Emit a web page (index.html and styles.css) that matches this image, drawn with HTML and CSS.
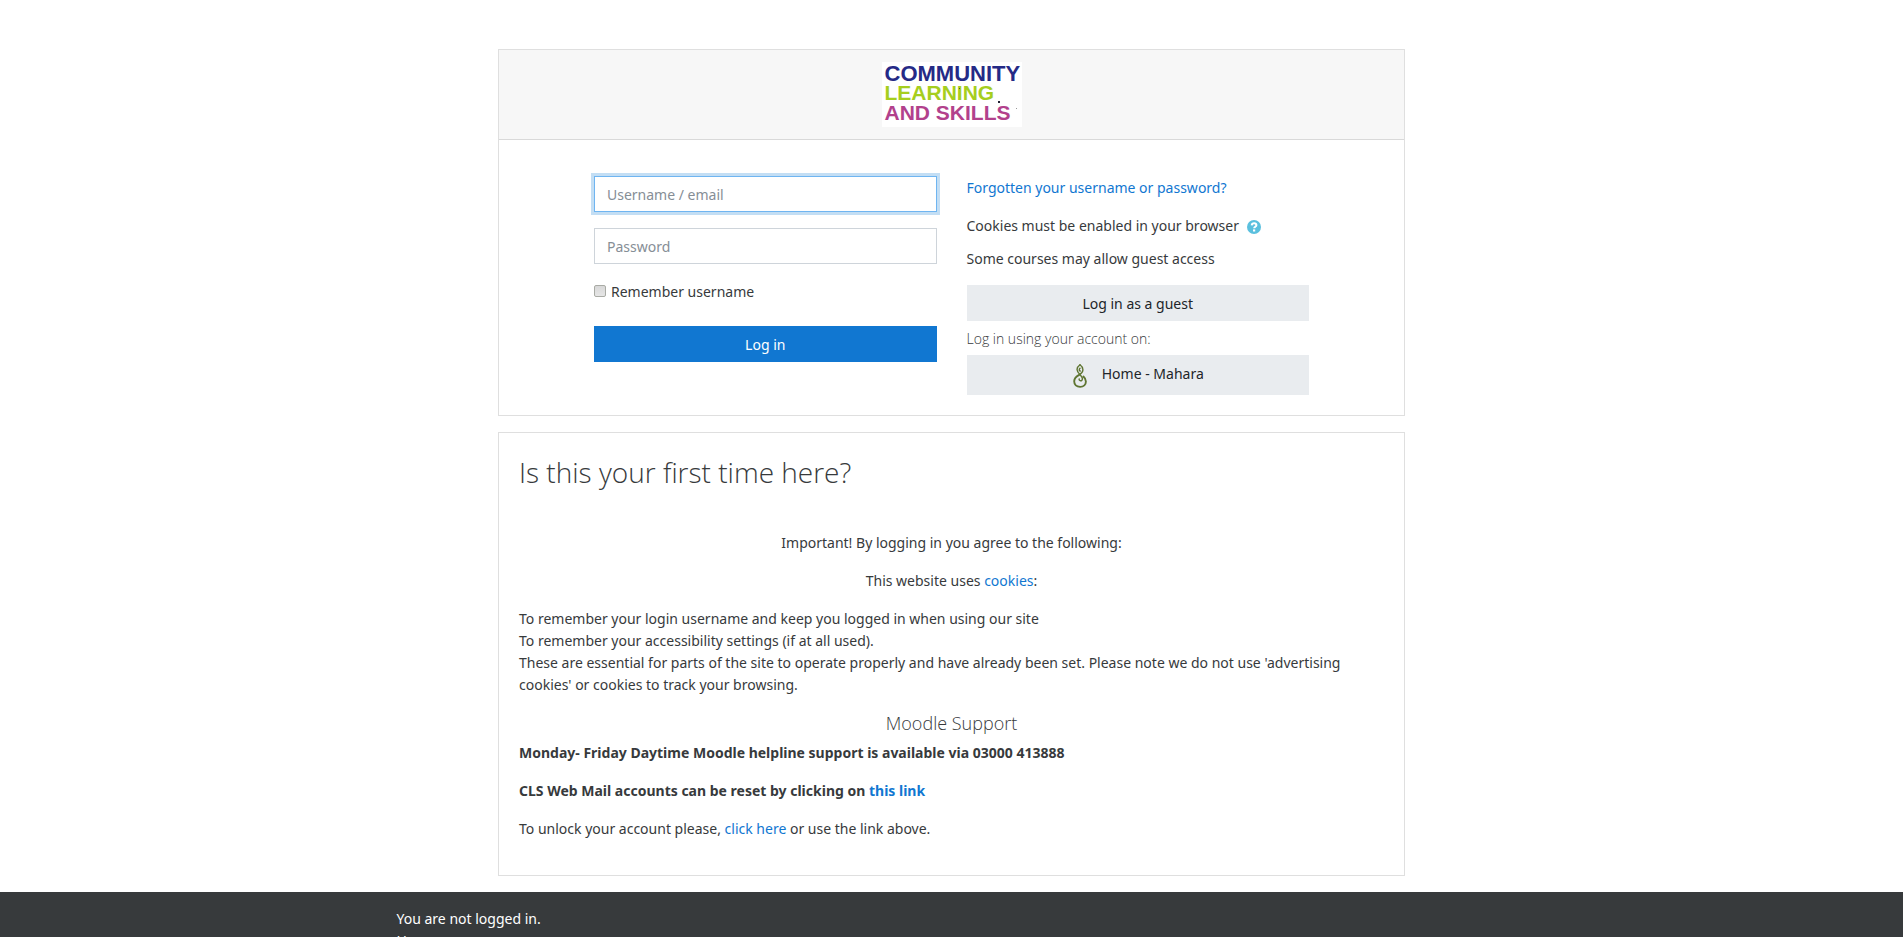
FILE: index.html
```html
<!DOCTYPE html>
<html lang="en">
<head>
<meta charset="utf-8">
<meta name="viewport" content="width=device-width, initial-scale=1">
<title>Community Learning and Skills: Log in</title>
<link rel="stylesheet" href="styles.css">
</head>
<body>
<main class="page">
  <section class="card">
    <header class="card-header">
      <div class="logo">
        <span class="logo-community">COMMUNITY</span>
        <span class="logo-learning">LEARNING</span>
        <span class="logo-skills">AND SKILLS</span>
        <svg class="logo-specks" viewBox="0 0 140 65" aria-hidden="true"><rect x="116" y="39" width="2" height="2" fill="#223"/><rect x="134" y="46" width="1" height="1" fill="#999"/><rect x="77" y="26" width="1" height="1" fill="#453"/></svg>
      </div>
    </header>
    <div class="login">
      <form class="login-form">
        <input class="field field-active" type="text" placeholder="Username / email" aria-label="Username / email">
        <input class="field" type="password" placeholder="Password" aria-label="Password">
        <div class="remember">
          <input class="check" type="checkbox" id="remember">
          <label for="remember">Remember username</label>
        </div>
        <button class="btn btn-primary" type="submit">Log in</button>
      </form>
      <div class="login-options">
        <p class="forgot"><a href="#">Forgotten your username or password?</a></p>
        <div class="cookies">Cookies must be enabled in your browser
          <a class="help" href="#" aria-label="Help with cookies"><svg viewBox="0 0 14 14" width="14" height="14"><circle cx="7" cy="7" r="7" fill="#5bc0de"/><path d="M4.700 5.300C4.900 3.900 5.800 3.300 7.100 3.300c1.400 0 2.300.8 2.300 1.900 0 1.600-2.200 1.500-2.200 3.100" fill="none" stroke="#fff" stroke-width="2"/><rect x="6" y="9.400" width="2.200" height="2.100" fill="#fff"/></svg></a>
        </div>
        <p class="guest">Some courses may allow guest access</p>
        <button class="btn btn-secondary" type="button">Log in as a guest</button>
        <h6 class="providers-title">Log in using your account on:</h6>
        <a class="btn btn-secondary provider" href="#">
          <svg viewBox="0 0 24 24" width="24" height="24" aria-hidden="true"><g fill="none" stroke="#5f7532" stroke-linecap="round"><path stroke-width="1.400" d="M12 .8C10 2.200 9 3.700 9.100 5.600c.1 2.200 1.500 3.600 3 5.200 1.400 1.400 2.400 2.700 2.300 4.200-.1 1.200-.9 1.900-1.900 1.800-1-.1-1.500-.9-1.300-1.800"/><path stroke-width="1.400" d="M12 .8c2 1.400 3 3.100 2.900 5.200-.1 2.600-1.600 3.500-3.400 4.600M12 4.200c-1 1-1 2.700.3 2.800"/><path stroke-width="1.900" d="M11.200 10.800C8 12.500 6.200 14.600 6.200 17.300c0 3.400 2.400 5.600 5.900 5.600s5.800-2.200 5.800-5.400c0-2.200-1-3.700-2.500-5"/></g></svg>
          <span>Home - Mahara</span>
        </a>
      </div>
    </div>
  </section>

  <section class="card intro">
    <h2>Is this your first time here?</h2>
    <p class="center">Important! By logging in you agree to the following:</p>
    <p class="center">This website uses <a href="#">cookies</a>:</p>
    <p>To remember your login username and keep you logged in when using our site<br>To remember your accessibility settings (if at all used).<br>These are essential for parts of the site to operate properly and have already been set. Please note we do not use 'advertising cookies' or cookies to track your browsing.</p>
    <h5 class="center">Moodle Support</h5>
    <p><strong>Monday- Friday Daytime Moodle helpline support is available via 03000 413888</strong></p>
    <p><strong>CLS Web Mail accounts can be reset by clicking on <a href="#">this link</a></strong></p>
    <p>To unlock your account please, <a href="#">click here</a> or use the link above.</p>
  </section>
</main>
<footer class="footer">
  <div class="footer-inner">
    <div>You are not logged in.</div>
    <a href="#">Home</a>
  </div>
</footer>
</body>
</html>
```
FILE: styles.css
```css
* { box-sizing: border-box; }

body {
  margin: 0;
  background: #fff;
  color: #373a3c;
  font: 14px/22px "Segoe UI", "Noto Sans", "Open Sans", sans-serif;
}

a { color: #1177d1; text-decoration: none; }
p { margin: 0 0 16px; }
h2, h5, h6 {
  margin: 0;
  font-family: "Segoe UI", "Open Sans", "Noto Sans", sans-serif;
  font-weight: 300;
}

.page {
  max-width: 907px;
  margin: 0 auto;
  padding: 49px 0 16px;
  display: flex;
  flex-direction: column;
  gap: 16px;
}

.card { border: 1px solid #dfdfdf; background: #fff; }

.card-header {
  display: flex;
  justify-content: center;
  padding: 12px 20px;
  background: #f7f7f7;
  border-bottom: 1px solid #d9d9d9;
}

.logo {
  position: relative;
  display: flex;
  flex-direction: column;
  width: 140px;
  height: 65px;
  padding: 2px 3px;
  background: #fff;
  font: bold 21px/19px "Liberation Sans", Arial, sans-serif;
}
.logo-community { color: #252a86; font-size: 22px; }
.logo-learning { color: #a6ce1e; }
.logo-skills { color: #b2418c; line-height: 21px; }
.logo-specks { position: absolute; inset: 0; }

.login {
  display: grid;
  grid-template-columns: 1fr 1fr;
  gap: 30px;
  padding: 36px 95px 20px;
}

.login-form { display: flex; flex-direction: column; }

.field {
  width: 100%;
  height: 36px;
  margin-bottom: 16px;
  padding: 6px 12px;
  border: 1px solid #ced4da;
  border-radius: 0;
  background: #fff;
  color: #495057;
  font: inherit;
}
.field::placeholder { color: #868e96; opacity: 1; }
.field-active {
  border-color: #6fb5f1;
  box-shadow: 0 0 0 3px #c3def4;
}

.remember {
  display: flex;
  align-items: center;
  gap: 5px;
  margin-bottom: 23px;
  padding-top: 1px;
}
.check {
  appearance: none;
  width: 12px;
  height: 12px;
  margin: 0 0 3px;
  border: 1px solid #a9aba5;
  border-radius: 2px;
  background: linear-gradient(#d8d8d8, #e6e6e6);
}

.btn {
  display: block;
  width: 100%;
  padding: 8px 12px 6px;
  border: 0;
  font: inherit;
  text-align: center;
}
.btn-primary { background: #1177d1; color: #fff; }
.btn-secondary { background: #e9ecef; color: #212529; }

.forgot { padding-top: 1px; }
.cookies { display: flex; gap: 8px; align-items: center; margin-bottom: 11px; }
.help { display: flex; padding-top: 2px; }
.guest { margin-bottom: 15px; }
.providers-title { padding: 7px 0 5px; font-size: 14px; line-height: 22px; }

.provider {
  display: flex;
  align-items: flex-start;
  justify-content: center;
  gap: 10px;
  padding: 8px 16px 8px 12px;
  line-height: 22px;
}
.provider svg { margin-top: 1px; margin-bottom: -1px; }

.intro { padding: 20px 20px 19px; }
.intro h2 { margin-bottom: 41px; font-size: 28px; line-height: 38px; }
.intro h5 { margin-bottom: 8px; font-size: 18px; line-height: 22px; }
.center { text-align: center; }

.footer { background: #373a3c; color: #fff; }
.footer-inner {
  max-width: 1140px;
  margin: 0 auto;
  padding: 16px 15px;
}
.footer a { color: #fff; }
```
